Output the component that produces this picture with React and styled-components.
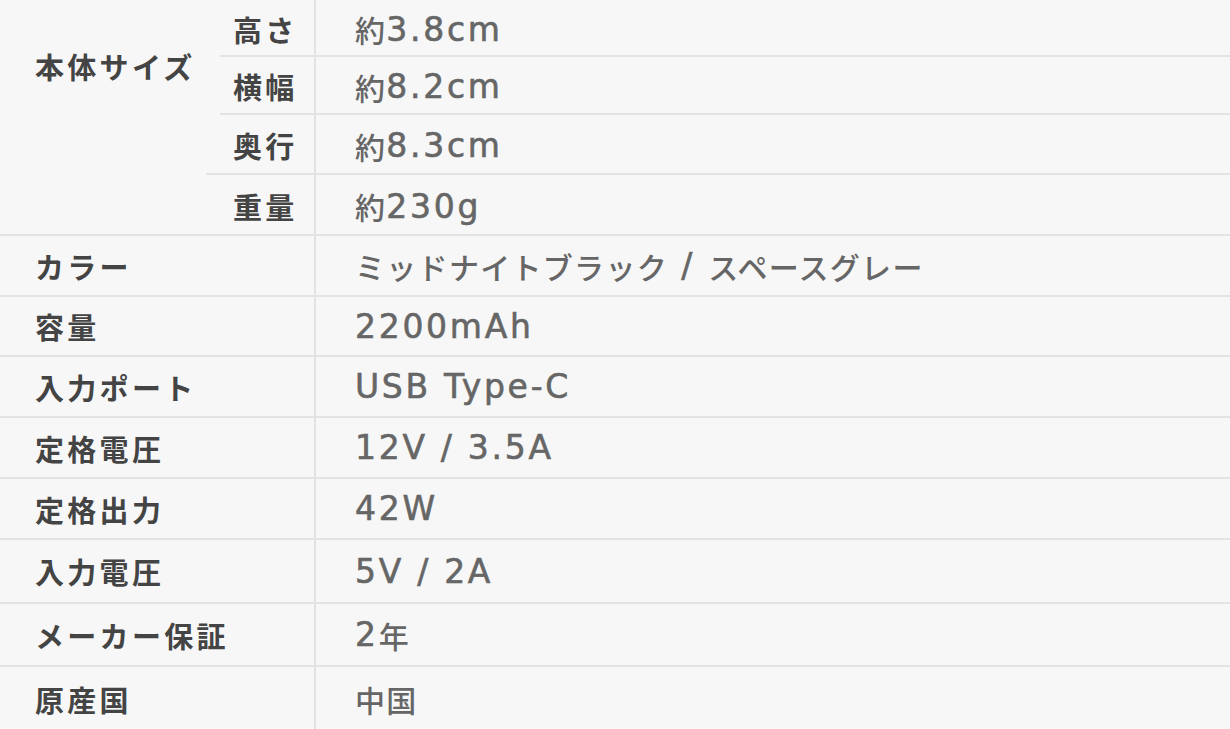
import React from 'react';
import styled, { createGlobalStyle } from 'styled-components';

const GlobalStyle = createGlobalStyle`
  html, body {
    margin     : 0;
    padding    : 0;
    background : #f7f7f7;
  }
  body {
    font-family : "Noto Sans CJK JP", "Noto Sans", sans-serif;
  }
`;

const Table = styled.div`
  display        : flex;
  flex-direction : column;
  width          : 1230px;
  background     : #f7f7f7;
`;

const Row = styled.div`
  display               : grid;
  grid-template-columns : 316px 1fr;
  height                : ${({h}) => h}px;
  border-bottom         : ${({last}) => last ? 'none' : '2px solid #e3e3e3'};
  box-sizing            : border-box;
`;

const Label = styled.div`
  display        : flex;
  align-items    : center;
  padding-left   : 35px;
  font-size      : 29px;
  font-weight    : 700;
  letter-spacing : 3.3px;
  color          : #444;
  border-right   : 2px solid #e3e3e3;
`;

const Value = styled.div`
  display        : flex;
  align-items    : center;
  padding-left   : 39px;
  font-size      : 30px;
  font-weight    : 500;
  letter-spacing : 1.3px;
  color          : #666;
  white-space    : pre;
`;

// latin runs use a wider face, like the reference
const Latin = styled.span`
  font-family         : "DejaVu Sans", "Noto Sans", sans-serif;
  font-size           : 33px;
  letter-spacing      : 2.7px;
  -webkit-text-stroke : 0.6px currentColor;
  vertical-align      : -1px;
`;

const Group = styled.div`
  display               : grid;
  grid-template-columns : 206px 1fr;
  border-bottom         : 2px solid #e3e3e3;
`;

const GroupLabel = styled.div`
  padding        : 52px 0 0 35px;
  font-size      : 29px;
  font-weight    : 700;
  letter-spacing : 3.3px;
  color          : #444;
  line-height    : 1;
`;

const SubList = styled.div`
  display        : flex;
  flex-direction : column;
`;

const SubRow = styled.div`
  display               : grid;
  grid-template-columns : ${({inset}) => inset ? 96 : 110}px 1fr;
  margin-left           : ${({inset}) => inset ? 14 : 0}px;
  height                : ${({h}) => h}px;
  padding-top           : 3px;
  box-sizing            : border-box;
  border-bottom         : ${({last}) => last ? 'none' : '2px solid #e3e3e3'};
`;

const SubLabel = styled(Label)`
  padding-left : ${({inset}) => inset ? 13 : 27}px;
  margin-top   : -3px;
  padding-top  : 2px;
`;

const sizes = [
  { label : '高さ', value : '約3.8cm', h : 57, inset : true },
  { label : '横幅', value : '約8.2cm', h : 58, inset : true },
  { label : '奥行', value : '約8.3cm', h : 60 },
  { label : '重量', value : '約230g',  h : 59, last : true },
];

const specs = [
  { label : 'カラー',       value : 'ミッドナイトブラック / スペースグレー', h : 61 },
  { label : '容量',         value : '2200mAh',      h : 60 },
  { label : '入力ポート',   value : 'USB Type-C',   h : 61 },
  { label : '定格電圧',     value : '12V / 3.5A',   h : 61 },
  { label : '定格出力',     value : '42W',          h : 61 },
  { label : '入力電圧',     value : '5V / 2A',      h : 64 },
  { label : 'メーカー保証', value : '2年',          h : 63 },
  { label : '原産国',       value : '中国',         h : 63, last : true },
];

const Text = ({children}) => (
  <>
    {children.split(/([\x20-\x7e]+)/).filter(Boolean).map((part, i) =>
      /^[\x20-\x7e]+$/.test(part) ? <Latin key={i}>{part}</Latin> : part
    )}
  </>
);

export default function App() {
  return (
    <>
      <GlobalStyle />
      <Table>
        <Group>
          <GroupLabel>本体サイズ</GroupLabel>
          <SubList>
            {sizes.map(s => (
              <SubRow key={s.label} h={s.h} inset={s.inset} last={s.last}>
                <SubLabel inset={s.inset}>{s.label}</SubLabel>
                <Value><Text>{s.value}</Text></Value>
              </SubRow>
            ))}
          </SubList>
        </Group>
        {specs.map(s => (
          <Row key={s.label} h={s.h} last={s.last}>
            <Label>{s.label}</Label>
            <Value><Text>{s.value}</Text></Value>
          </Row>
        ))}
      </Table>
    </>
  );
}
